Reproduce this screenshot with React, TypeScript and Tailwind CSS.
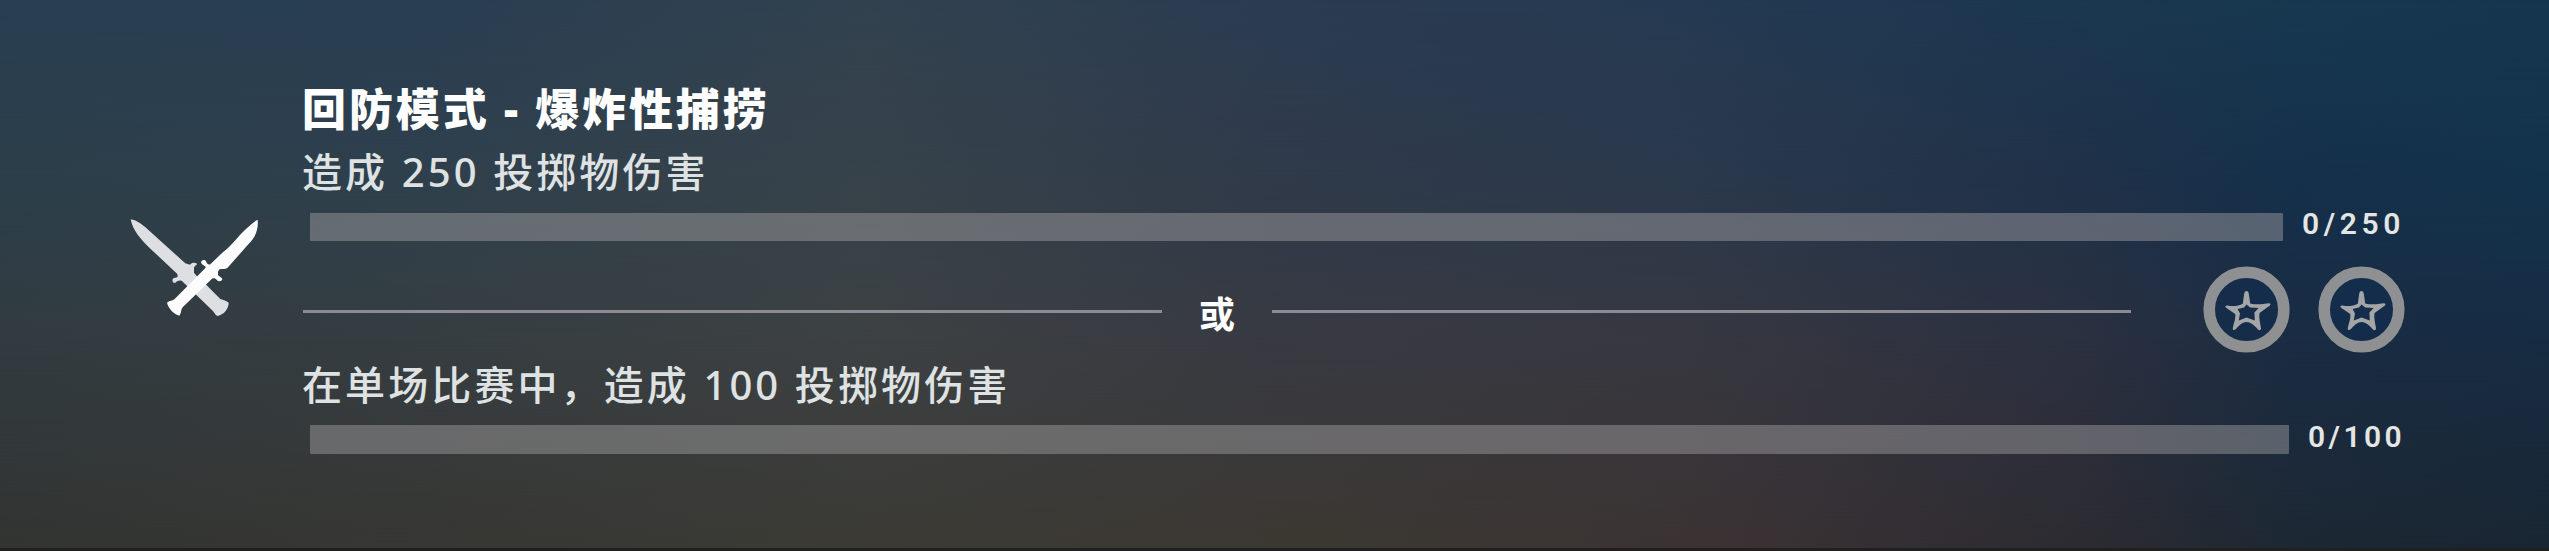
import { clsx } from "clsx";

type Goal = {
  text: string;
  current: number;
  target: number;
};

const mission = {
  title: "回防模式 - 爆炸性捕捞",
  separator: "或",
  stars: 2,
  goals: [
    { text: "造成 250 投掷物伤害", current: 0, target: 250 },
    { text: "在单场比赛中，造成 100 投掷物伤害", current: 0, target: 100 },
  ] as Goal[],
};

function Backdrop() {
  return (
    <div className="absolute inset-0 -z-10 bg-[linear-gradient(90deg,#293f51_0%,#293e53_16%,#32424f_34%,#2b3c52_50%,#253a52_66%,#1c3750_80%,#173850_90%,#16364f_100%)]">
      <div className="absolute inset-0 bg-[linear-gradient(90deg,#2c3f4a_0%,#2f404c_16%,#37424a_34%,#303a49_50%,#2b394c_66%,#1f3148_82%,#15304b_90%,#13324b_100%)] [mask-image:linear-gradient(180deg,transparent_0%,black_33%)]" />
      <div className="absolute inset-0 bg-[linear-gradient(90deg,#323b40_0%,#363d41_16%,#3d4143_34%,#383a42_50%,#373840_66%,#2b3040_82%,#1a2c43_90%,#172c43_100%)] [mask-image:linear-gradient(180deg,transparent_33%,black_62%)]" />
      <div className="absolute inset-0 bg-[linear-gradient(90deg,#323431_0%,#373733_16%,#3b3a34_34%,#3c3831_52%,#3b3233_68%,#2c2b31_82%,#1d2833_90%,#192632_100%)] [mask-image:linear-gradient(180deg,transparent_62%,black_100%)]" />
      <div className="absolute inset-x-0 bottom-0 h-[3px] bg-[#20211f]" />
    </div>
  );
}

function CrossedKnives() {
  return (
    <svg className="h-[130px] w-[170px] shrink-0" viewBox="0 0 510 390" aria-hidden="true">
      <path
        d="M62 58 C78 60 95 72 112 87 L226 190 L240 194 C246 187 255 187 262 192 C258 197 253 198 252 204 L252 218 L262 230 L290 256 L331 297 C340 301 350 302 356 308 C356 325 343 343 323 348 C316 346 314 338 308 332 L215 242 C207 240 201 243 197 248 C190 250 186 245 188 238 C190 232 198 234 203 230 L202 222 L118 143 C92 118 68 91 62 58 Z"
        fill="#dedfe2"
      />
      <path
        d="M443 59 C446 92 435 112 415 133 L352 204 C345 209 336 206 329 208 C323 213 324 219 324 225 C329 231 336 232 337 238 C335 245 326 245 321 241 C317 235 311 234 306 236 L218 322 C212 329 215 339 208 347 C193 342 176 328 171 308 C177 302 187 303 194 297 L287 203 C288 197 275 196 273 187 C275 179 285 178 288 184 C290 191 295 195 301 193 L337 158 C365 137 382 111 408 87 C420 76 432 65 443 59 Z"
        fill="#fdfdff"
      />
    </svg>
  );
}

function StarBadge() {
  return (
    <svg className="size-[87px]" viewBox="0 0 87 87" aria-hidden="true">
      <circle cx="43.5" cy="43.5" r="37.3" fill="#102d50" fillOpacity="0.6" stroke="#8f9092" strokeWidth="11.6" />
      {/* thin-armed star with a hollow centre */}
      <path
        fillRule="evenodd"
        fill="#a3a5a7"
        d="M43.5 25 C45 25 45.8 26.5 46 29 L47.2 37.4 C53 39 60 38 66 37.2 C68.5 37.4 67.5 39.4 65.5 40.6 L56.6 47 C55.6 51 57.4 58 58 62 C58 65 56 64.6 54.5 63 C51 59 47.5 56 43.5 56 C39.5 56 36.5 59 33 63 C31 64.8 29.4 64.4 29.8 62 C30.8 57 33 52 32.2 48 L23.4 42 C21.5 40.6 22.4 39.4 24.6 39.6 C30 40.6 35.5 40.2 39.8 37.8 L41 29 C41.2 26.5 42 25 43.5 25 Z M43.6 38.6 L41 41.4 L34.6 43 L37 47.6 L35.8 54.4 L43.5 51.4 L51.8 54.6 L51.4 46.4 L55.6 42 L47.2 41.4 Z"
      />
    </svg>
  );
}

function GoalText({ text, className }: { text: string; className?: string }) {
  return (
    <p
      className={clsx(
        "flex items-center whitespace-pre font-['Noto_Sans','Noto_Sans_CJK_SC',sans-serif] text-[40px] leading-none font-medium tracking-[3.1px] text-[#dfe2e3]",
        className,
      )}
    >
      {text}
    </p>
  );
}

function ProgressRow({ goal, className }: { goal: Goal; className?: string }) {
  return (
    <div className={clsx("flex items-center pl-[7px]", className)}>
      <div className="h-[28.5px] flex-1 rounded-[1px] bg-[#a7a5a6]/45">
        <div className="h-full bg-white" style={{ width: `${(goal.current / goal.target) * 100}%` }} />
      </div>
      <span
        className={clsx(
          "relative -top-[3px] ml-[19px] font-[Roboto,sans-serif] text-[30px] leading-none font-semibold text-[#e4e6e4]",
          goal.target === 100 ? "tracking-[3.4px]" : "tracking-[4.6px]",
        )}
      >
        {`${goal.current}/${goal.target}`}
      </span>
    </div>
  );
}

export default function App() {
  const [first, second] = mission.goals;

  return (
    <main className="relative isolate flex h-[551px] w-[2549px] overflow-hidden pt-20 pl-[110px]">
      <Backdrop />
      <div className="mt-[120px]">
        <CrossedKnives />
      </div>

      <section className="ml-[23px] w-[2102px]">
        <h1 className="-ml-px flex h-[58px] items-center whitespace-pre font-['Noto_Sans','Noto_Sans_CJK_SC',sans-serif] text-[44px] leading-none font-black tracking-[2.9px] text-white">
          {mission.title}
        </h1>
        <GoalText text={first.text} className="-ml-px h-[68px]" />
        <ProgressRow goal={first} className="h-[42px]" />

        <div className="mt-4 flex h-[92px] items-center">
          <div className="mt-[3px] h-[3px] w-[859px] bg-[#8b8c93]" />
          <span className="mt-[3px] w-[110px] text-center font-['Noto_Sans_CJK_SC',sans-serif] text-4xl leading-none font-bold text-white">
            {mission.separator}
          </span>
          <div className="mt-[3px] h-[3px] w-[859px] bg-[#8b8c93]" />
          <div className="-mt-0.5 ml-[72px] flex gap-7">
            {[...Array(mission.stars)].map((_, i) => (
              <StarBadge key={i} />
            ))}
          </div>
        </div>

        <GoalText text={second.text} className="-ml-px h-[58px]" />
        <ProgressRow goal={second} className="h-[51px]" />
      </section>
    </main>
  );
}
